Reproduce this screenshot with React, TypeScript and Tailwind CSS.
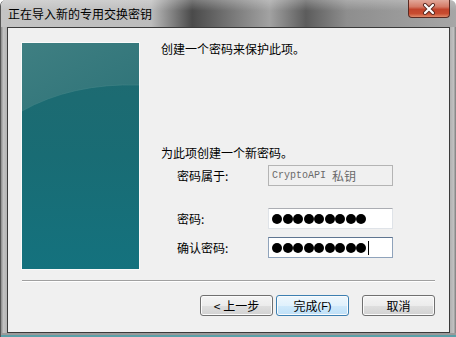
import React from "react";

const Dots = ({ n, cursor }: { n: number; cursor?: boolean }) => (
  <div className="flex items-center gap-[0.5px] pl-[3px] h-full">
    {Array.from({ length: n }).map((_, i) => (
      <div key={i} className="w-[10px] h-[10px] rounded-full bg-black" />
    ))}
    {cursor && <div className="w-px h-[14px] bg-black ml-[1px]" />}
  </div>
);

const Btn = ({ children, def }: { children: React.ReactNode; def?: boolean }) => (
  <div
    className={
      "w-[73px] h-[21px] rounded-[3px] border flex items-center justify-center text-[12px] leading-[14px] text-black shadow-[inset_0_0_0_1px_#fbfbfb] " +
      (def
        ? "border-[#3c7fb1] bg-[linear-gradient(to_bottom,#eef7fd_0%,#e0f1fc_50%,#cfe9fb_51%,#bfe0f7_100%)]"
        : "border-[#707070] bg-[linear-gradient(to_bottom,#f4f4f4_0%,#ececec_50%,#dfdfdf_51%,#d2d2d2_100%)]")
    }
  >
    {children}
  </div>
);

export default function App() {
  return (
    <div className="w-[456px] h-[337px] overflow-hidden bg-white [font-family:'Noto_Sans_CJK_SC','Liberation_Sans',sans-serif]">
      <div className="w-[456px] h-[337px] flex flex-col rounded-t-[6px] overflow-hidden border-l border-[#555]">
        {/* title bar */}
        <div className="relative h-[27px] bg-[linear-gradient(to_right,#c4c4c4_0%,#bcbcbc_33%,#4a4a4a_42%,#747474_50%,#a2a2a2_59%,#5c5c5c_67%,#8e8e8e_76%,#9c9c9c_90%,#a6a6a6_100%)]">
          <div className="absolute inset-0 bg-[linear-gradient(to_bottom,rgba(255,255,255,0.25)_0%,rgba(255,255,255,0)_40%,rgba(0,0,0,0)_100%)]" />
          <div className="relative pl-[7px] pt-[6px] text-[12px] leading-[16px] text-black">正在导入新的专用交换密钥</div>
          <div className="absolute right-[6px] top-0 w-[42px] h-[18px] rounded-b-[4px] border border-t-0 border-[#5a2a22] bg-[linear-gradient(to_bottom,#e2a89a_0%,#d47a66_40%,#c2442c_55%,#c84c30_80%,#e08a6a_100%)] flex items-center justify-center">
            <svg width="14" height="12" viewBox="0 0 14 12">
              <path d="M3 2 L11 10 M11 2 L3 10" stroke="#5a2a22" strokeWidth="4" strokeLinecap="round" />
              <path d="M3 2 L11 10 M11 2 L3 10" stroke="#ffffff" strokeWidth="2.2" strokeLinecap="round" />
            </svg>
          </div>
        </div>
        {/* body row */}
        <div className="flex h-[306px]">
          <div className="w-[6px] bg-[linear-gradient(to_right,#8a8a8a_0%,#c2c2c2_40%,#b4b4b4_100%)]" />
          <div className="w-[443px] h-[306px] border border-[#3a3a3a] bg-[#f0f0f0] flex flex-col">
            <div className="flex items-start pt-[13px] pl-[14px]">
              <div className="mt-[2px] w-[117px] h-[226px] outline-1 outline-[#fafafa] shrink-0">
                <svg width="117" height="226" viewBox="0 0 117 226">
                  <defs>
                    <linearGradient id="bg" x1="0" y1="0" x2="0" y2="1">
                      <stop offset="0" stopColor="#1f6a70" />
                      <stop offset="0.5" stopColor="#196c74" />
                      <stop offset="1" stopColor="#14727e" />
                    </linearGradient>
                    <linearGradient id="tp" x1="0" y1="0" x2="1" y2="1">
                      <stop offset="0" stopColor="#3f7f82" />
                      <stop offset="1" stopColor="#2e7378" />
                    </linearGradient>
                  </defs>
                  <rect x="0" y="0" width="117" height="226" fill="url(#bg)" />
                  <path d="M0 0 H117 V42 Q50 40 0 68 Z" fill="url(#tp)" />
                  <path d="M0 68 Q50 40 117 42" stroke="#4a8a8c" strokeWidth="1" fill="none" opacity="0.5" />
                </svg>
              </div>
              <div className="ml-[22px] flex flex-col text-[12px] leading-[16px] text-black">
                <div>创建一个密码来保护此项。</div>
                <div className="mt-[88px]">为此项创建一个新密码。</div>
                <div className="mt-[4px] flex items-center">
                  <div className="w-[107px] pl-[16px]">密码属于:</div>
                  <div className="w-[125px] h-[21px] border border-[#b4b4b4] bg-[#f0f0f0] flex items-center pl-[3px] text-[#6a6a6a]">
                    <span className="[font-family:'Liberation_Mono',monospace] text-[10px]">CryptoAPI&nbsp;</span>
                    <span>私钥</span>
                  </div>
                </div>
                <div className="mt-[22px] flex items-center">
                  <div className="w-[107px] pl-[16px]">密码:</div>
                  <div className="w-[125px] h-[21px] border border-[#dfe3e8] border-t-[#abadb3] bg-white">
                    <Dots n={9} />
                  </div>
                </div>
                <div className="mt-[8px] flex items-center">
                  <div className="w-[107px] pl-[16px]">确认密码:</div>
                  <div className="w-[125px] h-[21px] border border-[#8fa3bb] border-t-[#5f7590] bg-white">
                    <Dots n={9} cursor />
                  </div>
                </div>
              </div>
            </div>
            <div className="mt-[11px] mx-[14px] h-px bg-[#a0a0a0]" />
            <div className="mx-[14px] h-px bg-white" />
            <div className="mt-[13px] flex justify-end pr-[14px]">
              <Btn>&lt; 上一步</Btn>
              <div className="ml-[3px]">
                <Btn def>
                  完成<span className="[font-family:'Liberation_Sans',sans-serif] text-[11px]">(F)</span>
                </Btn>
              </div>
              <div className="ml-[13px]">
                <Btn>取消</Btn>
              </div>
            </div>
          </div>
          <div className="w-[6px] bg-[linear-gradient(to_right,#b0b0b0_0%,#c0c0c0_60%,#7a7a7a_100%)]" />
        </div>
        <div className="h-[2px] bg-[#9a9a9a]" />
        <div className="h-[2px] bg-[#5aa0a8]" />
      </div>
    </div>
  );
}
